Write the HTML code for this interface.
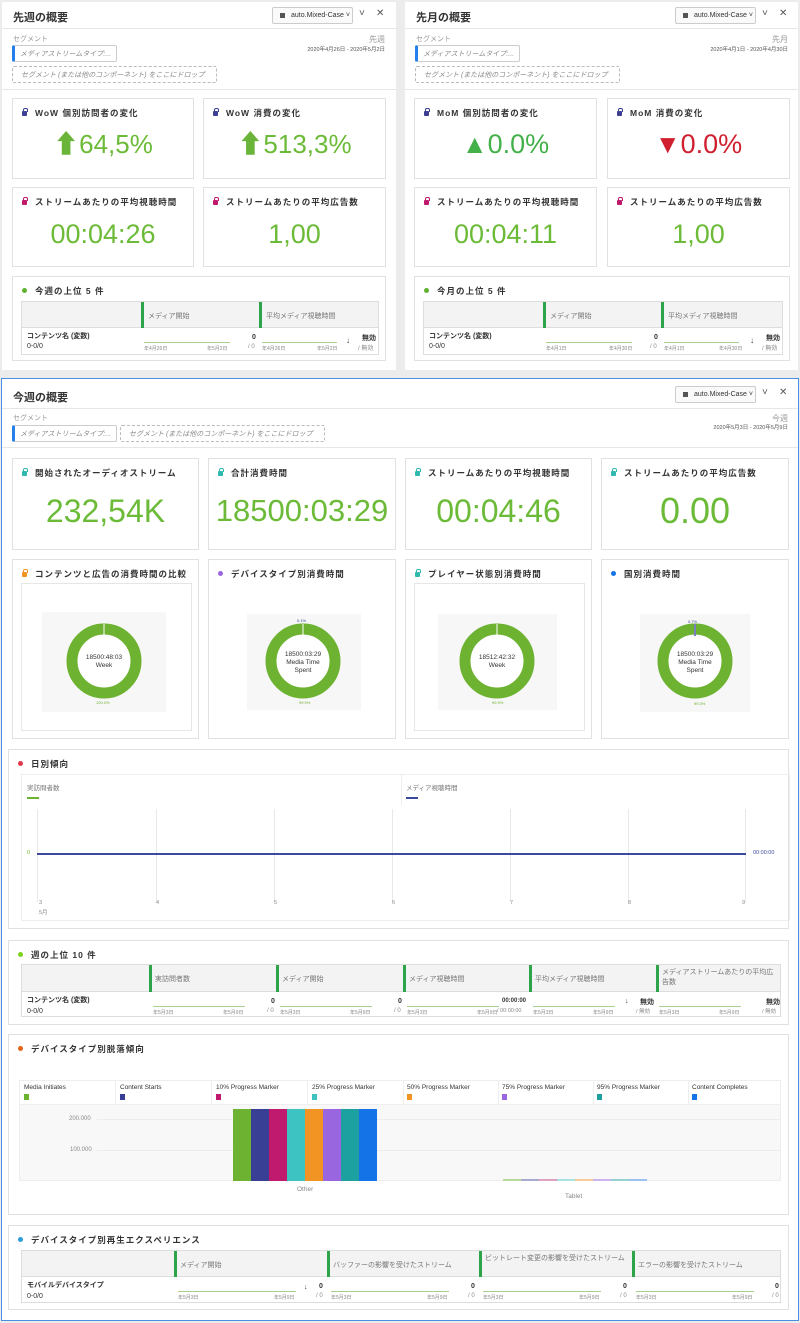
<!DOCTYPE html>
<html><head><meta charset="utf-8"><style>
*{margin:0;padding:0;box-sizing:border-box}
body{width:800px;height:1323px;background:#ececec;font-family:"Liberation Sans","Noto Sans CJK JP",sans-serif;position:relative;overflow:hidden;color:#333}
.a{position:absolute;white-space:nowrap}
.p{position:absolute;background:#fff}
.c{position:absolute;background:#fff;border:1px solid #e1e1e1}
.ct{position:absolute;left:22px;top:8px;font-size:8.5px;font-weight:bold;letter-spacing:1px;color:#333}
.lk{position:absolute;left:9px;top:12px;width:5px;height:5px;border-radius:1px}
.lk:before{content:"";position:absolute;left:1px;top:-3px;width:3px;height:3px;border:1px solid;border-color:inherit;border-bottom:0;border-radius:2px 2px 0 0}
.dot{position:absolute;left:9px;top:11px;width:5px;height:5px;border-radius:50%}
.n{position:absolute;left:0;right:0;text-align:center;color:#6cbb38;line-height:1;font-weight:300}
.hd{font-size:11px;font-weight:bold;color:#333}
.dd{position:absolute;height:17px;border:1px solid #ccc;border-radius:2px;background:#fafafa;font-size:7px;color:#333;padding:4px 0 0 18px;white-space:nowrap;overflow:hidden}
.dd:before{content:"";position:absolute;left:7px;top:5px;width:5px;height:5px;background:#555}
.sm{font-size:7px;color:#999}
.pill{position:absolute;height:17px;border:1px solid #ccc;border-left:3px solid #2680eb;border-radius:2px;font-size:7px;color:#888;font-style:italic;padding:3px 0 0 5px;background:#fff}
.drop{position:absolute;height:17px;border:1px dashed #bbb;border-radius:2px;font-size:7px;color:#888;font-style:italic;padding:3px 0 0 8px}
.sep{position:absolute;height:1px;background:#e6e6e6}
.tb{position:absolute;border:1px solid #ddd;background:#f7f7f7}
.th{position:absolute;left:0;right:0;top:0;background:#f3f3f3;border-bottom:1px solid #ddd}
.gb{position:absolute;top:0;width:3px;background:#2da44a}
.cl{position:absolute;font-size:7px;color:#777}
.sp{position:absolute;height:1px;background:#a8d08d}
.dt{position:absolute;font-size:5px;color:#888}
.b7{font-size:7px;font-weight:bold;color:#333}
.x{font-size:10px;color:#555}
</style></head><body>

<!-- TOP LEFT PANEL -->
<div class="p" style="left:2px;top:2px;width:394px;height:368px"></div>
<div class="a hd" style="left:13px;top:9px">先週の概要</div>
<div class="dd" style="left:272px;top:7px;width:81px">auto.Mixed-Case ˅</div>
<div class="a x" style="left:359px;top:8px">˅</div><div class="a x" style="left:376px;top:8px">✕</div>
<div class="sep" style="left:2px;top:28px;width:394px"></div>
<div class="a sm" style="left:13px;top:34px">セグメント</div>
<div class="pill" style="left:12px;top:45px;width:105px">メディアストリームタイプ:...</div>
<div class="drop" style="left:12px;top:66px;width:205px">セグメント (または他のコンポーネント) をここにドロップ</div>
<div class="a sm" style="right:415px;top:34px;font-size:8px">先週</div>
<div class="a" style="right:415px;top:45px;font-size:5.5px;color:#555">2020年4月26日 - 2020年5月2日</div>
<div class="sep" style="left:2px;top:89px;width:394px"></div>

<div class="c" style="left:12px;top:98px;width:182px;height:81px"><i class="lk" style="background:#3d3f93;border-color:#3d3f93"></i><div class="ct">WoW 個別訪問者の変化</div><div class="n" style="top:32px;font-size:26px"><span style="color:#6ab43a">⬆</span>64,5%</div></div>
<div class="c" style="left:203px;top:98px;width:183px;height:81px"><i class="lk" style="background:#3d3f93;border-color:#3d3f93"></i><div class="ct">WoW 消費の変化</div><div class="n" style="top:32px;font-size:26px"><span style="color:#6ab43a">⬆</span>513,3%</div></div>
<div class="c" style="left:12px;top:187px;width:182px;height:80px"><i class="lk" style="background:#c0186b;border-color:#c0186b"></i><div class="ct">ストリームあたりの平均視聴時間</div><div class="n" style="top:33px;font-size:27px">00:04:26</div></div>
<div class="c" style="left:203px;top:187px;width:183px;height:80px"><i class="lk" style="background:#c0186b;border-color:#c0186b"></i><div class="ct">ストリームあたりの平均広告数</div><div class="n" style="top:33px;font-size:27px">1,00</div></div>
<div class="c" style="left:12px;top:276px;width:374px;height:85px"><i class="dot" style="background:#5fb12f"></i><div class="ct">今週の上位 5 件</div>
 <div class="tb" style="left:8px;top:24px;width:358px;height:54px;background:#fff"><div class="th" style="height:26px"></div>
 <div class="gb" style="left:119px;height:26px"></div><div class="cl" style="left:126px;top:9px">メディア開始</div>
 <div class="gb" style="left:237px;height:26px"></div><div class="cl" style="left:244px;top:9px">平均メディア視聴時間</div>
 <div class="a b7" style="left:5px;top:29px">コンテンツ名 (変数)</div><div class="a" style="left:5px;top:41px;font-size:7px">0-0/0</div>
 <div class="sp" style="left:122px;top:40px;width:86px"></div><div class="dt" style="left:122px;top:43px">年4月26日</div><div class="dt" style="left:185px;top:43px">年5月2日</div>
 <div class="a b7" style="left:230px;top:32px">0</div><div class="dt" style="left:226px;top:42px;font-size:6px">/ 0</div>
 <div class="sp" style="left:240px;top:40px;width:75px"></div><div class="dt" style="left:240px;top:43px">年4月26日</div><div class="dt" style="left:295px;top:43px">年5月2日</div>
 <div class="a" style="left:324px;top:34px;font-size:8px">↓</div><div class="a b7" style="left:340px;top:31px">無効</div><div class="dt" style="left:336px;top:41px;font-size:6px">/ 無効</div>
 </div></div>

<!-- TOP RIGHT PANEL -->
<div class="p" style="left:405px;top:2px;width:393px;height:368px"></div>
<div class="a hd" style="left:416px;top:9px">先月の概要</div>
<div class="dd" style="left:675px;top:7px;width:81px">auto.Mixed-Case ˅</div>
<div class="a x" style="left:762px;top:8px">˅</div><div class="a x" style="left:779px;top:8px">✕</div>
<div class="sep" style="left:405px;top:28px;width:393px"></div>
<div class="a sm" style="left:416px;top:34px">セグメント</div>
<div class="pill" style="left:415px;top:45px;width:105px">メディアストリームタイプ:...</div>
<div class="drop" style="left:415px;top:66px;width:205px">セグメント (または他のコンポーネント) をここにドロップ</div>
<div class="a sm" style="right:12px;top:34px;font-size:8px">先月</div>
<div class="a" style="right:12px;top:45px;font-size:5.5px;color:#555">2020年4月1日 - 2020年4月30日</div>
<div class="sep" style="left:405px;top:89px;width:393px"></div>

<div class="c" style="left:414px;top:98px;width:183px;height:81px"><i class="lk" style="background:#3d3f93;border-color:#3d3f93"></i><div class="ct">MoM 個別訪問者の変化</div><div class="n" style="top:32px;font-size:27px;color:#43b04a"><span style="font-size:26px">▲</span>0.0%</div></div>
<div class="c" style="left:607px;top:98px;width:183px;height:81px"><i class="lk" style="background:#3d3f93;border-color:#3d3f93"></i><div class="ct">MoM 消費の変化</div><div class="n" style="top:32px;font-size:27px;color:#d0202f"><span style="font-size:26px">▼</span>0.0%</div></div>
<div class="c" style="left:414px;top:187px;width:183px;height:80px"><i class="lk" style="background:#c0186b;border-color:#c0186b"></i><div class="ct">ストリームあたりの平均視聴時間</div><div class="n" style="top:33px;font-size:27px">00:04:11</div></div>
<div class="c" style="left:607px;top:187px;width:183px;height:80px"><i class="lk" style="background:#c0186b;border-color:#c0186b"></i><div class="ct">ストリームあたりの平均広告数</div><div class="n" style="top:33px;font-size:27px">1,00</div></div>
<div class="c" style="left:414px;top:276px;width:376px;height:85px"><i class="dot" style="background:#5fb12f"></i><div class="ct">今月の上位 5 件</div>
 <div class="tb" style="left:8px;top:24px;width:360px;height:54px;background:#fff"><div class="th" style="height:26px"></div>
 <div class="gb" style="left:119px;height:26px"></div><div class="cl" style="left:126px;top:9px">メディア開始</div>
 <div class="gb" style="left:237px;height:26px"></div><div class="cl" style="left:244px;top:9px">平均メディア視聴時間</div>
 <div class="a b7" style="left:5px;top:29px">コンテンツ名 (変数)</div><div class="a" style="left:5px;top:41px;font-size:7px">0-0/0</div>
 <div class="sp" style="left:122px;top:40px;width:86px"></div><div class="dt" style="left:122px;top:43px">年4月1日</div><div class="dt" style="left:185px;top:43px">年4月30日</div>
 <div class="a b7" style="left:230px;top:32px">0</div><div class="dt" style="left:226px;top:42px;font-size:6px">/ 0</div>
 <div class="sp" style="left:240px;top:40px;width:75px"></div><div class="dt" style="left:240px;top:43px">年4月1日</div><div class="dt" style="left:295px;top:43px">年4月30日</div>
 <div class="a" style="left:326px;top:34px;font-size:8px">↓</div><div class="a b7" style="left:342px;top:31px">無効</div><div class="dt" style="left:338px;top:41px;font-size:6px">/ 無効</div>
 </div></div>

<!-- BOTTOM PANEL -->
<div class="p" style="left:1px;top:378px;width:798px;height:943px;border:1px solid #4a90e2"></div>
<div class="a hd" style="left:13px;top:389px">今週の概要</div>
<div class="dd" style="left:675px;top:386px;width:81px">auto.Mixed-Case ˅</div>
<div class="a x" style="left:762px;top:387px">˅</div><div class="a x" style="left:779px;top:387px">✕</div>
<div class="sep" style="left:2px;top:408px;width:796px"></div>
<div class="a sm" style="left:13px;top:413px">セグメント</div>
<div class="pill" style="left:12px;top:425px;width:105px">メディアストリームタイプ:...</div>
<div class="drop" style="left:120px;top:425px;width:205px">セグメント (または他のコンポーネント) をここにドロップ</div>
<div class="a sm" style="right:12px;top:413px;font-size:8px">今週</div>
<div class="a" style="right:12px;top:423px;font-size:5.5px;color:#555">2020年5月3日 - 2020年5月9日</div>
<div class="sep" style="left:2px;top:447px;width:796px"></div>

<div class="c" style="left:12px;top:458px;width:187px;height:92px"><i class="lk" style="background:#2fb8b0;border-color:#2fb8b0"></i><div class="ct">開始されたオーディオストリーム</div><div class="n" style="top:36px;font-size:32px">232,54K</div></div>
<div class="c" style="left:208px;top:458px;width:188px;height:92px"><i class="lk" style="background:#2fb8b0;border-color:#2fb8b0"></i><div class="ct">合計消費時間</div><div class="n" style="top:36px;font-size:31px">18500:03:29</div></div>
<div class="c" style="left:405px;top:458px;width:187px;height:92px"><i class="lk" style="background:#2fb8b0;border-color:#2fb8b0"></i><div class="ct">ストリームあたりの平均視聴時間</div><div class="n" style="top:36px;font-size:32px">00:04:46</div></div>
<div class="c" style="left:601px;top:458px;width:188px;height:92px"><i class="lk" style="background:#2fb8b0;border-color:#2fb8b0"></i><div class="ct">ストリームあたりの平均広告数</div><div class="n" style="top:34px;font-size:36px">0.00</div></div>

<div class="c" style="left:12px;top:559px;width:187px;height:180px"><i class="lk" style="background:#f29423;border-color:#f29423"></i><div class="ct">コンテンツと広告の消費時間の比較</div>
 <div class="a" style="left:8px;top:23px;width:171px;height:148px;border:1px solid #e6e6e6"></div>
 <div class="a" style="left:29px;top:52px;width:124px;height:100px;background:#f7f7f7"></div>
 <svg class="a" style="left:53px;top:63px" width="76" height="76"><circle cx="38" cy="38" r="32" fill="#fff" stroke="#6eb232" stroke-width="11"/><line x1="38" y1="1" x2="38" y2="13" stroke="#fff" stroke-width="1"/><text x="38" y="36" font-size="6.5" text-anchor="middle" fill="#333" font-family="Liberation Sans">18500:48:03</text><text x="38" y="44" font-size="6.5" text-anchor="middle" fill="#333" font-family="Liberation Sans">Week</text></svg>
 <div class="a" style="left:83px;top:140px;font-size:4px;color:#6eb232">100.0%</div></div>

<div class="c" style="left:208px;top:559px;width:188px;height:180px"><i class="dot" style="background:#9966e0"></i><div class="ct">デバイスタイプ別消費時間</div>
 <div class="a" style="left:38px;top:54px;width:114px;height:96px;background:#f7f7f7"></div>
 <svg class="a" style="left:56px;top:63px" width="76" height="76"><circle cx="38" cy="38" r="32" fill="#fff" stroke="#6eb232" stroke-width="11"/><line x1="38" y1="1" x2="38" y2="13" stroke="#fff" stroke-width="1"/><text x="38" y="33" font-size="6.5" text-anchor="middle" fill="#333" font-family="Liberation Sans">18500:03:29</text><text x="38" y="41" font-size="6.5" text-anchor="middle" fill="#333" font-family="Liberation Sans">Media Time</text><text x="38" y="49" font-size="6.5" text-anchor="middle" fill="#333" font-family="Liberation Sans">Spent</text></svg>
 <div class="a" style="left:88px;top:58px;font-size:4px;color:#3a3f96">0.1%</div>
 <div class="a" style="left:90px;top:140px;font-size:4px;color:#6eb232">99.9%</div></div>

<div class="c" style="left:405px;top:559px;width:187px;height:180px"><i class="lk" style="background:#2fb8b0;border-color:#2fb8b0"></i><div class="ct">プレイヤー状態別消費時間</div>
 <div class="a" style="left:8px;top:23px;width:171px;height:148px;border:1px solid #e6e6e6"></div>
 <div class="a" style="left:32px;top:54px;width:119px;height:96px;background:#f7f7f7"></div>
 <svg class="a" style="left:53px;top:63px" width="76" height="76"><circle cx="38" cy="38" r="32" fill="#fff" stroke="#6eb232" stroke-width="11"/><line x1="38" y1="1" x2="38" y2="13" stroke="#fff" stroke-width="1"/><text x="38" y="36" font-size="6.5" text-anchor="middle" fill="#333" font-family="Liberation Sans">18512:42:32</text><text x="38" y="44" font-size="6.5" text-anchor="middle" fill="#333" font-family="Liberation Sans">Week</text></svg>
 <div class="a" style="left:86px;top:140px;font-size:4px;color:#6eb232">99.9%</div></div>

<div class="c" style="left:601px;top:559px;width:188px;height:180px"><i class="dot" style="background:#1473e6"></i><div class="ct">国別消費時間</div>
 <div class="a" style="left:38px;top:54px;width:110px;height:98px;background:#f7f7f7"></div>
 <svg class="a" style="left:55px;top:63px" width="76" height="76"><circle cx="38" cy="38" r="32" fill="#fff" stroke="#6eb232" stroke-width="11"/><line x1="38" y1="1" x2="38" y2="13" stroke="#7a7fc0" stroke-width="2"/><text x="38" y="33" font-size="6.5" text-anchor="middle" fill="#333" font-family="Liberation Sans">18500:03:29</text><text x="38" y="41" font-size="6.5" text-anchor="middle" fill="#333" font-family="Liberation Sans">Media Time</text><text x="38" y="49" font-size="6.5" text-anchor="middle" fill="#333" font-family="Liberation Sans">Spent</text></svg>
 <div class="a" style="left:86px;top:59px;font-size:4px;color:#3a3f96">0.7%</div>
 <div class="a" style="left:92px;top:141px;font-size:4px;color:#6eb232">99.3%</div></div>

<!-- Daily trend -->
<div class="c" style="left:8px;top:749px;width:781px;height:180px"><i class="dot" style="background:#e03a4a"></i><div class="ct">日別傾向</div>
 <div class="a" style="left:12px;top:24px;width:769px;height:147px;border:1px solid #eee"></div>
 <div class="cl" style="left:18px;top:32px;font-size:6.5px">実訪問者数</div><div class="a" style="left:18px;top:47px;width:12px;height:2px;background:#6eb232"></div>
 <div class="a" style="left:392px;top:25px;width:1px;height:30px;background:#eee"></div>
 <div class="cl" style="left:397px;top:32px;font-size:6.5px">メディア視聴時間</div><div class="a" style="left:397px;top:47px;width:12px;height:2px;background:#3c4a9c"></div>
 <div class="a" style="left:28px;top:59px;width:1px;height:93px;background:#e8e8e8"></div>
 <div class="a" style="left:147px;top:59px;width:1px;height:93px;background:#e8e8e8"></div>
 <div class="a" style="left:265px;top:59px;width:1px;height:93px;background:#e8e8e8"></div>
 <div class="a" style="left:383px;top:59px;width:1px;height:93px;background:#e8e8e8"></div>
 <div class="a" style="left:501px;top:59px;width:1px;height:93px;background:#e8e8e8"></div>
 <div class="a" style="left:619px;top:59px;width:1px;height:93px;background:#e8e8e8"></div>
 <div class="a" style="left:736px;top:59px;width:1px;height:93px;background:#e8e8e8"></div>
 <div class="a" style="left:28px;top:103px;width:709px;height:2px;background:#3c4a9c"></div>
 <div class="a" style="left:18px;top:100px;font-size:5.5px;color:#6eb232">0</div>
 <div class="a" style="left:744px;top:100px;font-size:5.5px;color:#3c4a9c">00:00:00</div>
 <div class="dt" style="left:30px;top:150px;font-size:5.5px">3</div><div class="dt" style="left:30px;top:158px;font-size:5.5px">5月</div>
 <div class="dt" style="left:147px;top:150px;font-size:5.5px">4</div><div class="dt" style="left:265px;top:150px;font-size:5.5px">5</div><div class="dt" style="left:383px;top:150px;font-size:5.5px">6</div><div class="dt" style="left:501px;top:150px;font-size:5.5px">7</div><div class="dt" style="left:619px;top:150px;font-size:5.5px">8</div><div class="dt" style="left:733px;top:150px;font-size:5.5px">9</div>
</div>

<!-- Top 10 -->
<div class="c" style="left:8px;top:940px;width:781px;height:85px"><i class="dot" style="background:#7ed321"></i><div class="ct">週の上位 10 件</div>
 <div class="tb" style="left:12px;top:23px;width:760px;height:53px;background:#fff"><div class="th" style="height:27px"></div>
 <div class="gb" style="left:127px;height:27px"></div><div class="cl" style="left:133px;top:9px">実訪問者数</div>
 <div class="gb" style="left:254px;height:27px"></div><div class="cl" style="left:260px;top:9px">メディア開始</div>
 <div class="gb" style="left:381px;height:27px"></div><div class="cl" style="left:387px;top:9px">メディア視聴時間</div>
 <div class="gb" style="left:507px;height:27px"></div><div class="cl" style="left:513px;top:9px">平均メディア視聴時間</div>
 <div class="gb" style="left:634px;height:27px"></div><div class="cl" style="left:640px;top:3px;line-height:10px;white-space:normal;width:115px">メディアストリームあたりの平均広告数</div>
 <div class="a b7" style="left:5px;top:30px">コンテンツ名 (変数)</div><div class="a" style="left:5px;top:43px;font-size:7px">0-0/0</div>
 <div class="sp" style="left:131px;top:41px;width:92px"></div><div class="dt" style="left:131px;top:44px">年5月3日</div><div class="dt" style="left:201px;top:44px">年5月9日</div><div class="a b7" style="left:249px;top:33px">0</div><div class="dt" style="left:245px;top:43px;font-size:6px">/ 0</div>
 <div class="sp" style="left:258px;top:41px;width:92px"></div><div class="dt" style="left:258px;top:44px">年5月3日</div><div class="dt" style="left:328px;top:44px">年5月9日</div><div class="a b7" style="left:376px;top:33px">0</div><div class="dt" style="left:372px;top:43px;font-size:6px">/ 0</div>
 <div class="sp" style="left:385px;top:41px;width:92px"></div><div class="dt" style="left:385px;top:44px">年5月3日</div><div class="dt" style="left:455px;top:44px">年5月9日</div><div class="a b7" style="left:480px;top:33px;font-size:6px">00:00:00</div><div class="dt" style="left:475px;top:43px;font-size:5.5px">/ 00:00:00</div>
 <div class="sp" style="left:511px;top:41px;width:82px"></div><div class="dt" style="left:511px;top:44px">年5月3日</div><div class="dt" style="left:571px;top:44px">年5月9日</div><div class="a" style="left:603px;top:33px;font-size:7px">↓</div><div class="a b7" style="left:618px;top:32px">無効</div><div class="dt" style="left:614px;top:42px;font-size:5.5px">/ 無効</div>
 <div class="sp" style="left:637px;top:41px;width:82px"></div><div class="dt" style="left:637px;top:44px">年5月3日</div><div class="dt" style="left:697px;top:44px">年5月9日</div><div class="a b7" style="left:744px;top:32px">無効</div><div class="dt" style="left:740px;top:42px;font-size:5.5px">/ 無効</div>
 </div></div>

<!-- Dropout -->
<div class="c" style="left:8px;top:1034px;width:781px;height:181px"><i class="dot" style="background:#e0641a"></i><div class="ct">デバイスタイプ別脱落傾向</div>
 <div class="a" style="left:10px;top:45px;width:762px;height:101px;background:#f8f8f8;border:1px solid #eee"></div>
 <div class="a" style="left:10px;top:45px;width:762px;height:25px;background:#fff;border:1px solid #eee"></div>
 <div class="a" style="left:106px;top:45px;width:1px;height:25px;background:#eee"></div>
 <div class="a" style="left:202px;top:45px;width:1px;height:25px;background:#eee"></div>
 <div class="a" style="left:298px;top:45px;width:1px;height:25px;background:#eee"></div>
 <div class="a" style="left:394px;top:45px;width:1px;height:25px;background:#eee"></div>
 <div class="a" style="left:489px;top:45px;width:1px;height:25px;background:#eee"></div>
 <div class="a" style="left:584px;top:45px;width:1px;height:25px;background:#eee"></div>
 <div class="a" style="left:679px;top:45px;width:1px;height:25px;background:#eee"></div>
 <div class="a" style="left:15px;top:49px;font-size:6.5px">Media Initiates</div><div class="a" style="left:15px;top:59px;width:5px;height:6px;background:#6eb232"></div>
 <div class="a" style="left:111px;top:49px;font-size:6.5px">Content Starts</div><div class="a" style="left:111px;top:59px;width:5px;height:6px;background:#3a3f96"></div>
 <div class="a" style="left:207px;top:49px;font-size:6.5px">10% Progress Marker</div><div class="a" style="left:207px;top:59px;width:5px;height:6px;background:#bf1a6e"></div>
 <div class="a" style="left:303px;top:49px;font-size:6.5px">25% Progress Marker</div><div class="a" style="left:303px;top:59px;width:5px;height:6px;background:#3ec3c3"></div>
 <div class="a" style="left:398px;top:49px;font-size:6.5px">50% Progress Marker</div><div class="a" style="left:398px;top:59px;width:5px;height:6px;background:#f29423"></div>
 <div class="a" style="left:493px;top:49px;font-size:6.5px">75% Progress Marker</div><div class="a" style="left:493px;top:59px;width:5px;height:6px;background:#9966e0"></div>
 <div class="a" style="left:588px;top:49px;font-size:6.5px">95% Progress Marker</div><div class="a" style="left:588px;top:59px;width:5px;height:6px;background:#1ca0a0"></div>
 <div class="a" style="left:683px;top:49px;font-size:6.5px">Content Completes</div><div class="a" style="left:683px;top:59px;width:5px;height:6px;background:#1473e6"></div>
 <div class="a" style="left:88px;top:84px;width:684px;height:1px;background:#ececec"></div>
 <div class="a" style="left:88px;top:115px;width:684px;height:1px;background:#ececec"></div>
 <div class="a" style="left:60px;top:81px;font-size:6px;color:#888">200.000</div>
 <div class="a" style="left:61px;top:112px;font-size:6px;color:#888">100.000</div>
 <div class="a" style="left:224px;top:74px;width:18px;height:72px;background:#6eb232"></div>
 <div class="a" style="left:242px;top:74px;width:18px;height:72px;background:#3a3f96"></div>
 <div class="a" style="left:260px;top:74px;width:18px;height:72px;background:#bf1a6e"></div>
 <div class="a" style="left:278px;top:74px;width:18px;height:72px;background:#3ec3c3"></div>
 <div class="a" style="left:296px;top:74px;width:18px;height:72px;background:#f29423"></div>
 <div class="a" style="left:314px;top:74px;width:18px;height:72px;background:#9966e0"></div>
 <div class="a" style="left:332px;top:74px;width:18px;height:72px;background:#1ca0a0"></div>
 <div class="a" style="left:350px;top:74px;width:18px;height:72px;background:#1473e6"></div>
 <div class="a" style="left:494px;top:144px;width:144px;height:2px;background:linear-gradient(90deg,#b7d99a 12.5%,#a8aad0 12.5% 25%,#e0a0c0 25% 37.5%,#a8e3e3 37.5% 50%,#f8cc98 50% 62.5%,#ccb4f0 62.5% 75%,#94d2d2 75% 87.5%,#9cc2f4 87.5%)"></div>
 <div class="a" style="left:288px;top:151px;font-size:6.5px;color:#888">Other</div>
 <div class="a" style="left:556px;top:158px;font-size:6.5px;color:#888">Tablet</div>
</div>

<!-- Playback -->
<div class="c" style="left:8px;top:1225px;width:781px;height:85px"><i class="dot" style="background:#2d9cdb"></i><div class="ct">デバイスタイプ別再生エクスペリエンス</div>
 <div class="tb" style="left:12px;top:24px;width:760px;height:53px;background:#fff"><div class="th" style="height:26px"></div>
 <div class="gb" style="left:152px;height:26px"></div><div class="cl" style="left:158px;top:9px">メディア開始</div>
 <div class="gb" style="left:305px;height:26px"></div><div class="cl" style="left:311px;top:9px">バッファーの影響を受けたストリーム</div>
 <div class="gb" style="left:457px;height:26px"></div><div class="cl" style="left:463px;top:3px;line-height:10px;white-space:normal;width:140px">ビットレート変更の影響を受けたストリーム</div>
 <div class="gb" style="left:610px;height:26px"></div><div class="cl" style="left:616px;top:9px">エラーの影響を受けたストリーム</div>
 <div class="a b7" style="left:5px;top:29px">モバイルデバイスタイプ</div><div class="a" style="left:5px;top:42px;font-size:7px">0-0/0</div>
 <div class="sp" style="left:156px;top:40px;width:118px"></div><div class="dt" style="left:156px;top:43px">年5月3日</div><div class="dt" style="left:252px;top:43px">年5月9日</div><div class="a" style="left:282px;top:33px;font-size:7px">↓</div><div class="a b7" style="left:297px;top:32px">0</div><div class="dt" style="left:294px;top:42px;font-size:6px">/ 0</div>
 <div class="sp" style="left:309px;top:40px;width:118px"></div><div class="dt" style="left:309px;top:43px">年5月3日</div><div class="dt" style="left:405px;top:43px">年5月9日</div><div class="a b7" style="left:449px;top:32px">0</div><div class="dt" style="left:446px;top:42px;font-size:6px">/ 0</div>
 <div class="sp" style="left:461px;top:40px;width:118px"></div><div class="dt" style="left:461px;top:43px">年5月3日</div><div class="dt" style="left:557px;top:43px">年5月9日</div><div class="a b7" style="left:601px;top:32px">0</div><div class="dt" style="left:598px;top:42px;font-size:6px">/ 0</div>
 <div class="sp" style="left:614px;top:40px;width:118px"></div><div class="dt" style="left:614px;top:43px">年5月3日</div><div class="dt" style="left:710px;top:43px">年5月9日</div><div class="a b7" style="left:753px;top:32px">0</div><div class="dt" style="left:750px;top:42px;font-size:6px">/ 0</div>
 </div></div>

</body></html>
